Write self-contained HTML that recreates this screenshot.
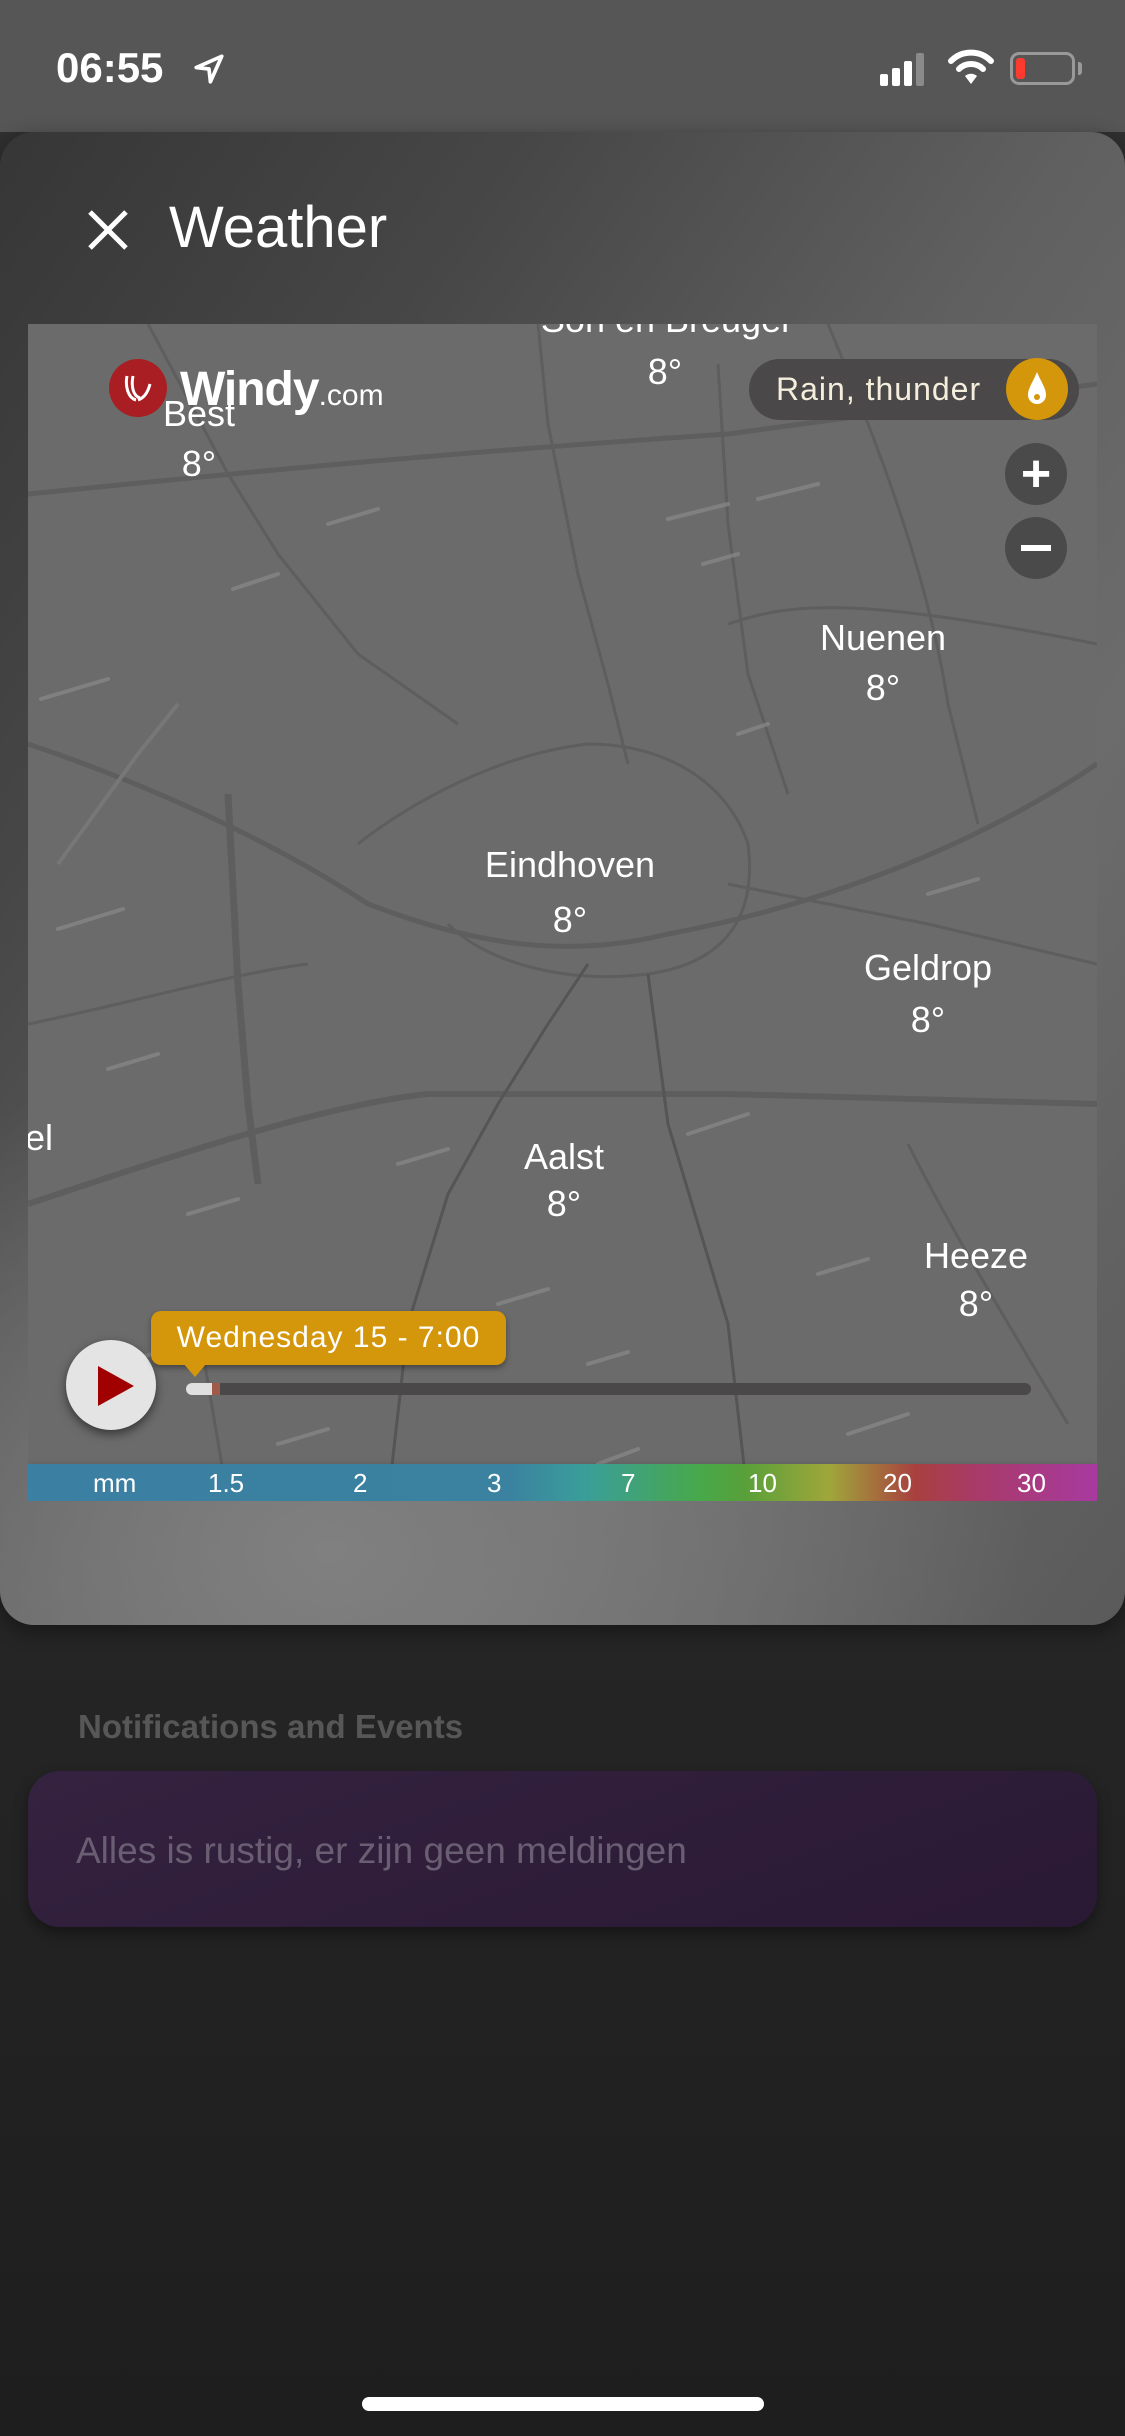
<!DOCTYPE html>
<html><head><meta charset="utf-8"><style>
*{margin:0;padding:0;box-sizing:border-box}
body{width:1125px;height:2436px;overflow:hidden;background:#2a2a2a;font-family:"Liberation Sans",sans-serif;position:relative}
.sb{position:absolute;left:0;top:0;width:1125px;height:132px;background:#565656}
.bg{position:absolute;left:0;top:132px;width:1125px;height:2304px;background:linear-gradient(180deg,#303030 0%,#262626 60%,#1e1e1e 100%)}
.card{position:absolute;left:0;top:132px;width:1125px;height:1493px;border-radius:34px;background:radial-gradient(ellipse 700px 500px at 330px 1420px,#808080,rgba(128,128,128,0) 100%),linear-gradient(125deg,#363636 0%,#474747 25%,#606060 50%,#6c6c6c 70%,#5a5a5a 100%);overflow:hidden;box-shadow:0 6px 20px rgba(0,0,0,.4)}
.map{position:absolute;left:28px;top:324px;width:1069px;height:1177px;background:#6b6b6b;overflow:hidden}
.lbl{position:absolute;color:#fff;font-size:36px;text-align:center;transform:translateX(-50%);white-space:nowrap;font-weight:300;line-height:1}
.t{position:absolute;color:#fff}
</style></head><body>
<div class="sb"></div>
<div class="t" style="left:56px;top:44px;font-size:42px;font-weight:bold;letter-spacing:0px">06:55</div>
<svg style="position:absolute;left:192px;top:52px" width="34" height="34" viewBox="0 0 24 24"><path d="M21 3 L3 11 L12 12 L13 21 Z" fill="none" stroke="#fff" stroke-width="2.6" stroke-linejoin="round"/></svg>
<svg style="position:absolute;left:880px;top:50px" width="52" height="36" viewBox="0 0 52 36"><rect x="0" y="24" width="8" height="12" rx="2" fill="#fff"/><rect x="12" y="18" width="8" height="18" rx="2" fill="#fff"/><rect x="24" y="11" width="8" height="25" rx="2" fill="#fff"/><rect x="36" y="3" width="8" height="33" rx="2" fill="#8a8a8a"/></svg>
<svg style="position:absolute;left:948px;top:48px" width="46" height="38" viewBox="0 0 46 38"><path d="M3 13 A28 28 0 0 1 43 13" fill="none" stroke="#fff" stroke-width="6" stroke-linecap="round"/><path d="M11 21 A17 17 0 0 1 35 21" fill="none" stroke="#fff" stroke-width="6" stroke-linecap="round"/><path d="M17 28 L23 36 L29 28 A9 9 0 0 0 17 28Z" fill="#fff"/></svg>
<div style="position:absolute;left:1010px;top:52px;width:65px;height:33px;border:3px solid #999;border-radius:9px"></div>
<div style="position:absolute;left:1078px;top:62px;width:4px;height:13px;background:#999;border-radius:0 3px 3px 0"></div>
<div style="position:absolute;left:1016px;top:58px;width:9px;height:21px;background:#ff3b30;border-radius:3px"></div>
<div class="bg"></div>
<div class="card">
<svg style="position:absolute;left:86px;top:76px" width="44" height="44" viewBox="0 0 44 44"><path d="M4 4 L40 40 M40 4 L4 40" stroke="#fff" stroke-width="5"/></svg>
<div class="t" style="left:169px;top:62px;font-size:58px">Weather</div>
</div>
<div class="map">
<svg width="1069" height="1177" style="position:absolute;left:0;top:0" fill="none" stroke="#5e5e5e" stroke-width="3">
<path d="M0 170 C200 150 400 130 700 110 L1069 60" stroke-width="5"/>
<path d="M0 420 C120 460 250 520 340 580 C420 610 520 640 640 610 C800 580 950 520 1069 440" stroke-width="5"/>
<path d="M200 470 L210 660 L220 780 L230 860" stroke-width="7"/>
<path d="M0 880 C150 830 300 780 400 770 L700 770 L1069 780" stroke-width="6"/>
<path d="M330 520 C380 480 470 430 560 420 C640 420 700 460 720 520 C730 600 690 640 620 650 C540 660 460 640 420 600"/>
<path d="M120 0 L200 150 L250 230 L330 330 L430 400"/>
<path d="M510 0 L520 100 L550 250 L580 360 L600 440"/>
<path d="M690 40 L700 200 L720 350 L760 470"/>
<path d="M800 0 C850 120 900 250 920 380 L950 500"/>
<path d="M560 640 L520 700 L470 780 L420 870 L380 1000 L360 1177" stroke="#555"/>
<path d="M620 650 L640 800 L700 1000 L720 1177" stroke="#555"/>
<path d="M700 560 L900 600 L1069 640"/>
<path d="M0 700 C100 680 200 650 280 640"/>
<path d="M700 300 C760 280 820 270 1069 320"/>
<path d="M30 540 L110 430 L150 380" stroke-width="4" stroke="#777"/>
<path d="M880 820 C920 900 980 1000 1040 1100"/>
<path d="M170 1000 L200 1177"/>
</svg>
<svg width="1069" height="1177" style="position:absolute;left:0;top:0;opacity:.7" stroke="#8a8a8a" stroke-width="4" stroke-linecap="round">
<path d="M13 375 L80 355"/><path d="M640 195 L700 180"/><path d="M730 175 L790 160"/><path d="M675 240 L710 230"/><path d="M205 265 L250 250"/><path d="M30 605 L95 585"/><path d="M80 745 L130 730"/><path d="M160 890 L210 875"/><path d="M75 1045 L140 1025"/><path d="M370 840 L420 825"/><path d="M470 980 L520 965"/><path d="M570 1140 L610 1125"/><path d="M660 810 L720 790"/><path d="M790 950 L840 935"/><path d="M900 570 L950 555"/><path d="M710 410 L740 400"/><path d="M300 200 L350 185"/><path d="M560 1040 L600 1028"/><path d="M250 1120 L300 1105"/><path d="M820 1110 L880 1090"/>
</svg>
<div class="lbl" style="left:171px;top:72px">Best</div>
<div class="lbl" style="left:171px;top:122px">8°</div>
<div class="lbl" style="left:637px;top:-22px">Son en Breugel</div>
<div class="lbl" style="left:637px;top:30px">8°</div>
<div class="lbl" style="left:855px;top:296px">Nuenen</div>
<div class="lbl" style="left:855px;top:346px">8°</div>
<div class="lbl" style="left:542px;top:523px">Eindhoven</div>
<div class="lbl" style="left:542px;top:578px">8°</div>
<div class="lbl" style="left:900px;top:626px">Geldrop</div>
<div class="lbl" style="left:900px;top:678px">8°</div>
<div class="lbl" style="left:11px;top:796px">el</div>
<div class="lbl" style="left:536px;top:815px">Aalst</div>
<div class="lbl" style="left:536px;top:862px">8°</div>
<div class="lbl" style="left:948px;top:914px">Heeze</div>
<div class="lbl" style="left:948px;top:962px">8°</div>
<div style="position:absolute;left:81px;top:35px;width:58px;height:58px;border-radius:50%;background:#a81e22"></div>
<svg style="position:absolute;left:92px;top:46px" width="36" height="36" viewBox="0 0 36 36" fill="none" stroke="#fff" stroke-width="3"><path d="M7 6 C5 16 8 28 16 30"/><path d="M13 6 C11 16 13 26 20 28"/><path d="M30 14 C28 22 24 28 18 30"/></svg>
<div class="t" style="left:152px;top:38px;font-size:48px;font-weight:bold;letter-spacing:-1px">Windy<span style="font-size:30px;font-weight:normal;letter-spacing:0">.com</span></div>
<div style="position:absolute;left:721px;top:35px;width:330px;height:61px;border-radius:31px;background:#4a4848"></div>
<div class="t" style="left:748px;top:47px;font-size:32px;color:#f5eedc;letter-spacing:1px">Rain, thunder</div>
<div style="position:absolute;left:978px;top:34px;width:62px;height:62px;border-radius:50%;background:#d4960a"></div>
<svg style="position:absolute;left:996px;top:46px" width="26" height="38" viewBox="0 0 26 38"><path d="M13 2 C9 12 4 18 4 25 A9 9 0 0 0 22 25 C22 18 17 12 13 2Z" fill="#fff"/><circle cx="13" cy="27" r="3" fill="#d4960a"/></svg>
<div style="position:absolute;left:977px;top:119px;width:62px;height:62px;border-radius:50%;background:#4a4a4a"></div>
<div class="t" style="left:977px;top:119px;width:62px;line-height:62px;text-align:center;font-size:52px;font-weight:bold">+</div>
<div style="position:absolute;left:977px;top:193px;width:62px;height:62px;border-radius:50%;background:#4a4a4a"></div>
<div style="position:absolute;left:993px;top:221px;width:30px;height:6px;background:#fff"></div>
<div style="position:absolute;left:38px;top:1016px;width:90px;height:90px;border-radius:50%;background:#e4e4e4;box-shadow:0 4px 10px rgba(0,0,0,.5)"></div>
<svg style="position:absolute;left:66px;top:1040px" width="44" height="44" viewBox="0 0 44 44"><path d="M4 2 L40 22 L4 42Z" fill="#a00000"/></svg>
<div style="position:absolute;left:123px;top:987px;width:355px;height:54px;border-radius:10px;background:#d4960a;box-shadow:0 3px 6px rgba(0,0,0,.35)"></div>
<div style="position:absolute;left:155px;top:1039px;width:0;height:0;border-left:12px solid transparent;border-right:12px solid transparent;border-top:14px solid #d4960a"></div>
<div class="t" style="left:123px;top:987px;width:355px;line-height:54px;text-align:center;font-size:30px;letter-spacing:1px">Wednesday 15 - 7:00</div>
<div style="position:absolute;left:158px;top:1059px;width:845px;height:12px;border-radius:6px;background:#4a4848"></div>
<div style="position:absolute;left:158px;top:1059px;width:26px;height:12px;border-radius:6px 0 0 6px;background:#e0e0e0"></div>
<div style="position:absolute;left:184px;top:1059px;width:8px;height:12px;background:#a05a4a"></div>
<div style="position:absolute;left:0;top:1140px;width:1069px;height:37px;background:linear-gradient(90deg,#3b7fa2 0%,#3a82a0 45%,#3a9e9a 52%,#48a84a 63%,#58a03a 67%,#a0a63a 75%,#a84040 83%,#a83a6a 89%,#a83aa0 100%);box-shadow:0 4px 8px rgba(0,0,0,.4)"></div>
<div class="t" style="left:0;top:1144px;width:1069px;height:30px;font-size:26px">
<span style="position:absolute;left:65px">mm</span><span style="position:absolute;left:180px">1.5</span><span style="position:absolute;left:325px">2</span><span style="position:absolute;left:459px">3</span><span style="position:absolute;left:593px">7</span><span style="position:absolute;left:720px">10</span><span style="position:absolute;left:855px">20</span><span style="position:absolute;left:989px">30</span></div>
</div>
<div class="t" style="left:78px;top:1708px;font-size:33px;font-weight:bold;color:#575757">Notifications and Events</div>
<div style="position:absolute;left:28px;top:1771px;width:1069px;height:156px;border-radius:32px;background:linear-gradient(160deg,#342240,#2a1934);box-shadow:0 6px 14px rgba(0,0,0,.4)"></div>
<div class="t" style="left:76px;top:1830px;font-size:37px;color:#6a5e72">Alles is rustig, er zijn geen meldingen</div>
<div style="position:absolute;left:362px;top:2397px;width:402px;height:14px;border-radius:7px;background:#fff"></div>
</body></html>
